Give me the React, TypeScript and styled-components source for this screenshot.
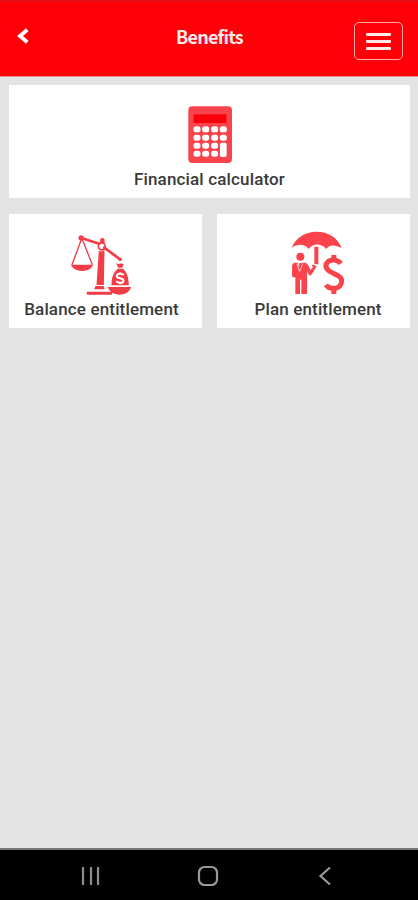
import React from "react";
import styled, { createGlobalStyle } from "styled-components";

const GlobalStyle = createGlobalStyle`
  * { box-sizing: border-box; }
  body { margin: 0; background: #e3e3e3; font-family: Roboto, "Liberation Sans", sans-serif; }
`;

const Screen = styled.div`
  display: flex;
  flex-direction: column;
  width: 418px;
  height: 900px;
  overflow: hidden;
  background: #e3e3e3;
`;

const Header = styled.header`
  display: grid;
  grid-template-columns: 64px 1fr 64px;
  align-items: start;
  height: 77px;
  flex: none;
  background: #ff0008;
  border-top: 2px solid #e80d18;
  border-bottom: 1px solid #f58a8c;
`;

const BackButton = styled.button`
  display: flex;
  margin: 23px 0 0 15px;
  width: 16px;
  height: 22px;
  padding: 0;
  border: 0;
  background: none;
`;

const Title = styled.h1`
  margin: 22px 0 0 1px;
  text-align: center;
  color: #ffecec;
  font: 700 18px/24px "Noto Sans CJK SC", "Noto Sans", sans-serif;
  letter-spacing: -0.75px;
`;

const MenuButton = styled.button`
  display: flex;
  flex-direction: column;
  align-items: center;
  justify-content: center;
  gap: 4px;
  width: 49px;
  height: 38px;
  margin-top: 20px;
  padding: 0;
  border: 1px solid #ffa9ab;
  border-radius: 5px;
  background: none;
`;

const MenuBar = styled.span`
  width: 25px;
  height: 3px;
  border-radius: 1px;
  background: #ffeaea;
`;

const Content = styled.main`
  flex: 1;
  display: grid;
  grid-template-columns: 193px 193px;
  grid-template-rows: 113px 114px;
  gap: 16px 15px;
  align-content: start;
  padding: 8px 8px 0 9px;
`;

const Card = styled.section<{ $wide?: boolean; $shift?: number }>`
  grid-column: ${(p) => (p.$wide ? "1 / -1" : "auto")};
  display: flex;
  flex-direction: column;
  align-items: center;
  padding-top: ${(p) => (p.$wide ? 10 : 11)}px;
  padding-left: ${(p) => Math.max(0, p.$shift ?? 0)}px;
  padding-right: ${(p) => Math.max(0, -(p.$shift ?? 0))}px;
  background: #fff;
`;

const Art = styled.svg`
  display: block;
  flex: none;
`;

const Label = styled.span`
  font-size: 17px;
  font-weight: 500;
  line-height: 18px;
  letter-spacing: 0.15px;
  color: #3a3a3a;
  white-space: nowrap;
`;

const NavBar = styled.nav`
  display: grid;
  grid-template-columns: repeat(3, 117px);
  justify-content: center;
  justify-items: center;
  height: 52px;
  flex: none;
  padding: 15px 2px 0 0;
  border-top: 2px solid #777;
  background: #000;
`;

const RED = "#fb434b";

const Calculator = () => (
  <Art width="60" height="75" viewBox="0 -15 180 225">
    <rect x="25" y="19" width="131" height="170" rx="12" fill={RED} />
    <rect x="41" y="43" width="98" height="26" fill="#f8000a" />
    <g fill="#fff">
      {[88, 113, 137, 161].map((y) =>
        [51, 77, 104, 130].map((x) =>
          x === 130 && y > 120 ? null : (
            <rect key={`${x}-${y}`} x={x - 10.5} y={y - 9} width="21" height="18" rx="8" />
          )
        )
      )}
      <rect x="120" y="128" width="20" height="43" rx="5" />
    </g>
  </Art>
);

const Scales = () => (
  <Art width="80" height="75" viewBox="5.5 0 240 225">
    <g fill="none" stroke="#f23d46" strokeLinecap="round" strokeLinejoin="round">
      <path d="M64 39 L117 56 M132 68 L180 103" strokeWidth="8" />
      <path d="M64 42 L36 118 M66 42 L96 118" strokeWidth="4" />
      <circle cx="125" cy="64" r="10.5" strokeWidth="5" />
    </g>
    <g fill="#f23d46">
      <circle cx="63" cy="39" r="8" />
      <path d="M120 54 V43 Q127 35 133 43 V54Z" />
      <path d="M116 77 Q125 82 133 76 L131 180 H109Z" />
      <path d="M106 183 H130 L134 193 H102Z" />
      <rect x="80" y="200" width="76" height="9" rx="2" />
      <path d="M32 119 H99 Q93 137 66 138 Q39 137 32 119Z" />
      <circle cx="180" cy="103" r="5" />
      <path d="M168 115 L177 118 L182 115 L191 118 L186 128 H174Z" />
      <path d="M173 131 H188 C202 143 205 158 206 181 H154 C154 158 158 143 173 131Z" />
      <path d="M143 186 H213 Q206 208 178 209 Q150 208 143 186Z" />
    </g>
    <path
      d="M191 150 C184 143 169 146 170 154 C171 162 190 157 190 167 C190 175 174 176 168 168"
      fill="none"
      stroke="#fff"
      strokeWidth="6"
    />
    <path d="M180 142 V148 M180 171 V178" stroke="#fff" strokeWidth="5" />
  </Art>
);

const UmbrellaPlan = () => (
  <Art width="80" height="75" viewBox="-6 0 240 225">
    <g fill={RED}>
      <path d="M35 68 C47 39 74 20 109 20 C145 20 173 38 185 69 C166 60 149 57 139 72 C125 54 98 54 86 72 C73 55 52 56 35 68Z" />
      <rect x="103" y="65" width="12" height="53" rx="2" />
      <circle cx="61" cy="95" r="12" />
      <path d="M43 113 H53 L59 134 L64 113 H76 Q82 114 86 123 L91 135 L99 126 L94 121 L100 119 L110 124 L94 150 Q89 154 85 147 L81 138 V207 H64 V164 H60 V207 H46 V157 H39 Q36 155 36 150 V124 Q36 115 43 113Z" />
      <path d="M58 114 H63 L64 130 L60 137 L57 130Z" />
      <path d="M154 90 H169 V105 H154Z M154 190 H169 V207 H154Z" />
    </g>
    <path d="M50 116 L59 139 L68 116" fill="none" stroke="#fff" strokeWidth="2" />
    <path
      d="M182 116 C173 102 151 102 142 112 C130 126 144 138 160 145 C178 152 190 160 183 177 C175 195 146 193 138 179"
      fill="none"
      stroke={RED}
      strokeWidth="15"
    />
  </Art>
);

export default function App() {
  return (
    <>
      <GlobalStyle />
      <Screen>
        <Header>
          <BackButton aria-label="Back">
            <Art width="16" height="22" viewBox="0 0 16 22">
              <path d="M12.3 4.8 L5 11 L12.3 17.2" fill="none" stroke="#fff" strokeWidth="3.8" />
            </Art>
          </BackButton>
          <Title>Benefits</Title>
          <MenuButton aria-label="Menu">
            <MenuBar />
            <MenuBar />
            <MenuBar />
          </MenuButton>
        </Header>
        <Content>
          <Card $wide>
            <Calculator />
            <Label>Financial calculator</Label>
          </Card>
          <Card $shift={-8}>
            <Scales />
            <Label>Balance entitlement</Label>
          </Card>
          <Card $shift={9}>
            <UmbrellaPlan />
            <Label>Plan entitlement</Label>
          </Card>
        </Content>
        <NavBar>
          <Art width="20" height="22" viewBox="0 0 20 22">
            <path d="M2 2 V20 M10 2 V20 M17 2 V20" stroke="#8c8c8c" strokeWidth="2.2" />
          </Art>
          <Art width="22" height="22" viewBox="0 0 22 22">
            <rect x="2" y="2" width="18" height="18" rx="5.5" fill="none" stroke="#999" strokeWidth="2.2" />
          </Art>
          <Art width="16" height="22" viewBox="0 0 16 22">
            <path d="M13 2.5 L3.5 11 L13 19.5" fill="none" stroke="#999" strokeWidth="2.2" />
          </Art>
        </NavBar>
      </Screen>
    </>
  );
}
